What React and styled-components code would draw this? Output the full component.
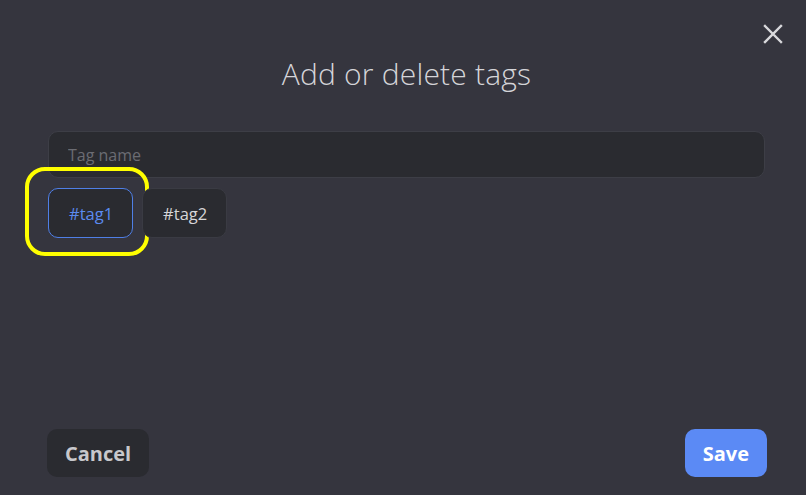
import React from "react";
import styled, { createGlobalStyle } from "styled-components";

const Global = createGlobalStyle`
  html, body { margin: 0; padding: 0; background: #35353e; }
  body { font-family: "Open Sans", "Noto Sans", sans-serif; }
  * { box-sizing: border-box; }
`;

const Dialog = styled.div`
  position: relative;
  width: 806px;
  height: 495px;
  background: #35353e;
  display: flex;
  flex-direction: column;
  padding: 52px 41px 18px 48px;
`;

const Close = styled.button`
  position: absolute;
  top: 20px;
  right: 19px;
  width: 28px;
  height: 28px;
  padding: 0;
  border: none;
  background: transparent;
  display: flex;
  align-items: center;
  justify-content: center;
  cursor: pointer;
`;

const Title = styled.h2`
  margin: 0;
  text-align: center;
  font-weight: 300;
  font-size: 30px;
  letter-spacing: 0.2px;
  line-height: 44px;
  color: #d4d4d8;
`;

const Input = styled.input`
  margin-top: 35px;
  width: 100%;
  height: 47px;
  border-radius: 10px;
  border: 1px solid #3d3e46;
  background: #2a2b30;
  padding: 0 19px;
  font-family: inherit;
  font-size: 16px;
  color: #d0d0d0;
  outline: none;
  &::placeholder { color: #6b6c73; }
`;

const Tags = styled.div`
  display: flex;
  gap: 9px;
  margin-top: 10px;
`;

const Tag = styled.div`
  position: relative;
  height: 50px;
  padding: 0 19px 0 20px;
  display: flex;
  align-items: center;
  border-radius: 10px;
  background: #2a2b30;
  border: 1px solid ${(p) => (p.$active ? "#4f7fe6" : "#3a3b43")};
  color: ${(p) => (p.$active ? "#5b8aef" : "#d6d6d8")};
  font-size: 16.5px;
`;

const Highlight = styled.span`
  position: absolute;
  top: -22px;
  left: -24px;
  right: -17px;
  bottom: -19px;
  border: 4px solid #ffff00;
  border-radius: 20px;
  pointer-events: none;
`;

const Footer = styled.div`
  margin-top: auto;
  display: flex;
  justify-content: space-between;
  margin-left: -1px;
  margin-right: -2px;
`;

const Button = styled.button`
  height: 48px;
  padding: 0 18px;
  border: none;
  border-radius: 10px;
  font-family: inherit;
  font-weight: 700;
  font-size: 20px;
  background: ${(p) => (p.$primary ? "#5b8af5" : "#2a2b30")};
  color: ${(p) => (p.$primary ? "#ffffff" : "#c8c8cc")};
  cursor: pointer;
`;

export default function App() {
  return (
    <>
      <Global />
      <Dialog>
        <Close aria-label="Close">
          <svg width="20" height="20" viewBox="0 0 20 20">
            <path d="M2 2 L18 18 M18 2 L2 18" stroke="#d9d9dc" strokeWidth="2.4" strokeLinecap="square" />
          </svg>
        </Close>
        <Title>Add or delete tags</Title>
        <Input placeholder="Tag name" />
        <Tags>
          <Tag $active>
            #tag1
            <Highlight />
          </Tag>
          <Tag>#tag2</Tag>
        </Tags>
        <Footer>
          <Button>Cancel</Button>
          <Button $primary>Save</Button>
        </Footer>
      </Dialog>
    </>
  );
}
